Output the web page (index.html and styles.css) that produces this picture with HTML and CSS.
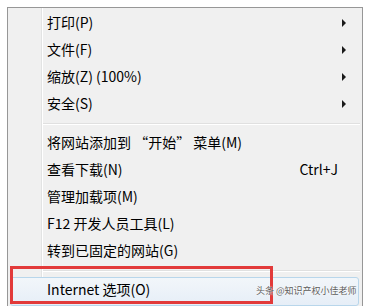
FILE: index.html
```html
<!DOCTYPE html>
<html>
<head>
<meta charset="utf-8">
<link rel="stylesheet" href="styles.css">
</head>
<body>
<div class="page">
  <div class="menu">
    <div class="item"><span class="label">打印(P)</span><span class="arrow"></span></div>
    <div class="item"><span class="label">文件(F)</span><span class="arrow"></span></div>
    <div class="item"><span class="label">缩放(Z) (100%)</span><span class="arrow"></span></div>
    <div class="item"><span class="label">安全(S)</span><span class="arrow"></span></div>
    <div class="sep"></div>
    <div class="item"><span class="label">将网站添加到 “开始” 菜单(M)</span></div>
    <div class="item"><span class="label">查看下载(N)</span><span class="key">Ctrl+J</span></div>
    <div class="item"><span class="label">管理加载项(M)</span></div>
    <div class="item"><span class="label">F12 开发人员工具(L)</span></div>
    <div class="item"><span class="label">转到已固定的网站(G)</span></div>
    <div class="sep"></div>
    <div class="item hover"><span class="label">Internet 选项(O)</span></div>
  </div>
  <div class="redbox"></div>
  <div class="watermark">头条 @知识产权小佳老师</div>
</div>
</body>
</html>
```
FILE: styles.css
```css
html, body {
  margin: 0;
  padding: 0;
  background: #ffffff;
}
.page {
  position: relative;
  width: 370px;
  height: 306px;
  overflow: hidden;
  font-family: "Noto Sans CJK SC", "Noto Sans", sans-serif;
  font-size: 14px;
  color: #000;
}
.menu {
  position: relative;
  margin: 7px 0 0 7px;
  width: 356px;
  height: 310px;
  border: 1px solid #979797;
  border-bottom: none;
  background: #f0f0f0;
  padding-top: 1px;
  box-sizing: border-box;
  display: flex;
  flex-direction: column;
}
.menu::before {
  content: "";
  position: absolute;
  left: 33px;
  top: 0;
  bottom: 0;
  width: 1px;
  background: #e2e3e3;
  box-shadow: 1px 0 0 #ffffff;
}
.item {
  position: relative;
  height: 27px;
  display: flex;
  align-items: center;
  padding-left: 39px;
  padding-right: 16px;
  line-height: 27px;
}
.label {
  flex: 1;
  white-space: nowrap;
}
.key {
  margin-right: 8px;
}
.arrow {
  width: 0;
  height: 0;
  border-top: 4px solid transparent;
  border-bottom: 4px solid transparent;
  border-left: 4px solid #1a1a1a;
}
.sep {
  height: 12px;
  display: flex;
  align-items: center;
  padding-left: 35px;
  padding-right: 2px;
}
.sep::after {
  content: "";
  flex: 1;
  height: 1px;
  background: #e0e0e0;
  box-shadow: 0 1px 0 #ffffff;
}
.hover::before {
  content: "";
  position: absolute;
  left: 2px;
  right: 3px;
  top: 1px;
  bottom: -3px;
  border: 1px solid #b8d6eb;
  border-radius: 3px;
  background: linear-gradient(#f2f6fa, #e6eef7);
  z-index: 0;
}
.hover .label {
  position: relative;
  z-index: 1;
}
.redbox {
  position: absolute;
  left: 10px;
  top: 266px;
  width: 263px;
  height: 38px;
  border: 3px solid #e23a3a;
  box-sizing: border-box;
}
.watermark {
  position: absolute;
  left: 256px;
  top: 285px;
  font-size: 9px;
  line-height: 12px;
  color: #5a5a5a;
  text-shadow: 0 0 2px #ffffff, 0 0 1px #ffffff;
  white-space: nowrap;
}
```
